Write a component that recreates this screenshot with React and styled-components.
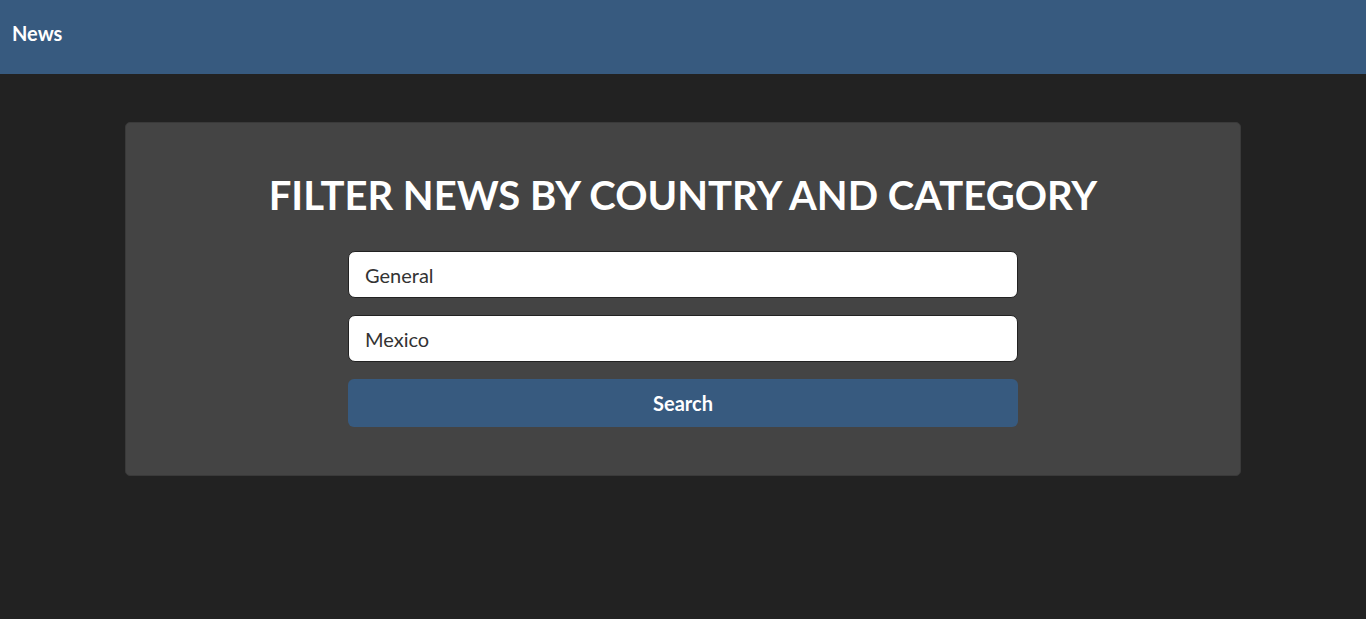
import React from "react";
import styled, { createGlobalStyle } from "styled-components";

const Global = createGlobalStyle`
  html, body { margin: 0; padding: 0; background: #222222; }
  body { font-family: Lato, "Liberation Sans", sans-serif; min-height: 100vh; }
  * { box-sizing: border-box; }
`;

const Navbar = styled.header`
  height: 74px;
  background: #375a7f;
  display: flex;
  align-items: center;
  padding: 0 12px;
`;

const Brand = styled.span`
  color: #ffffff;
  font-weight: 700;
  font-size: 20px;
  margin-top: -9px;
`;

const Main = styled.main`
  display: flex;
  justify-content: center;
  padding-top: 48px;
`;

const Card = styled.section`
  width: 1116px;
  height: 354px;
  background: #444444;
  border: 1px solid #3a3a3a;
  border-radius: 5px;
  display: flex;
  flex-direction: column;
  align-items: center;
  padding-top: 48px;
`;

const Title = styled.h1`
  margin: 0 0 32px;
  color: #ffffff;
  font-size: 40px;
  line-height: 48px;
  font-weight: 700;
  text-transform: uppercase;
`;

const Form = styled.form`
  width: 670px;
  display: flex;
  flex-direction: column;
  gap: 17px;
`;

const Field = styled.div`
  height: 47px;
  background: #ffffff;
  border: 1px solid #222222;
  border-radius: 7px;
  display: flex;
  align-items: center;
  padding: 0 16px;
  color: #333333;
  font-size: 20px;
`;

const Button = styled.button`
  height: 48px;
  background: #375a7f;
  border: none;
  border-radius: 6px;
  color: #ffffff;
  font-family: inherit;
  font-size: 20px;
  font-weight: 700;
  cursor: pointer;
`;

export default function App() {
  return (
    <>
      <Global />
      <Navbar>
        <Brand>News</Brand>
      </Navbar>
      <Main>
        <Card>
          <Title>Filter News by Country and Category</Title>
          <Form onSubmit={(e) => e.preventDefault()}>
            <Field>General</Field>
            <Field>Mexico</Field>
            <Button type="submit">Search</Button>
          </Form>
        </Card>
      </Main>
    </>
  );
}
